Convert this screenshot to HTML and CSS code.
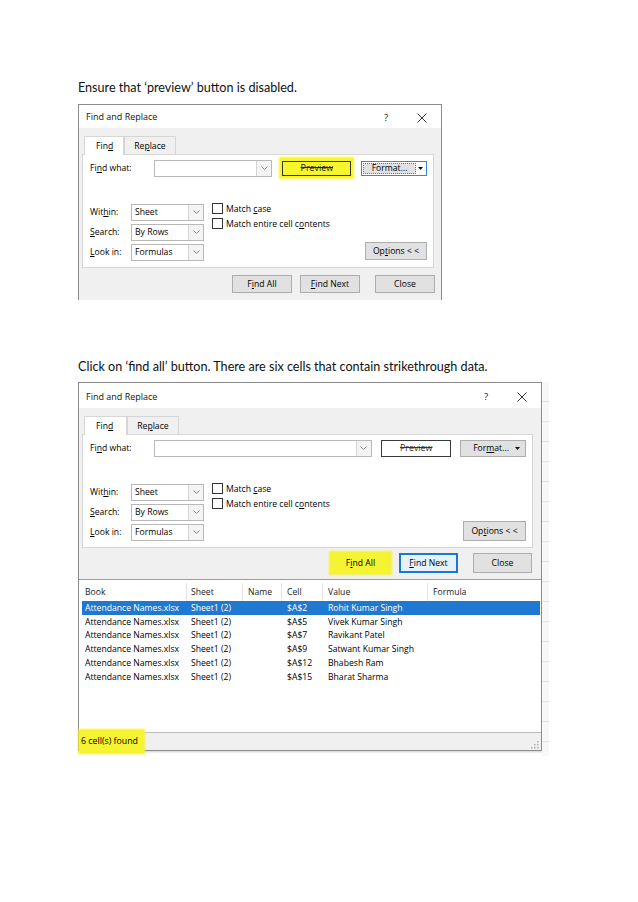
FILE: index.html
```html
<!DOCTYPE html>
<html lang="en">
<head>
<meta charset="utf-8">
<title>Find and Replace</title>
<link rel="stylesheet" href="styles.css">
</head>
<body>
<main class="page">
  <p class="caption">Ensure that ‘preview’ button is disabled.</p>

  <section class="dialog dlg1">
    <div class="titlebar">
      <span class="title">Find and Replace</span>
      <span class="help">?</span>
      <span class="close"><svg width="10" height="10" viewBox="0 0 10 10"><path d="M0.5 0.5L9.5 9.5M9.5 0.5L0.5 9.5" stroke="#333" stroke-width="1" fill="none"/></svg></span>
    </div>
    <div class="body">
      <div class="tabs">
        <span class="tab active"><span>Fin<u>d</u></span></span>
        <span class="tab"><span>Re<u>p</u>lace</span></span>
      </div>
      <div class="panel">
        <div class="find-row">
          <span class="lbl-find">Fi<u>n</u>d what:</span>
          <span class="combo combo-find"><span class="val"></span><span class="arrow"><svg width="7" height="4" viewBox="0 0 7 4"><path d="M0.5 0.5L3.5 3.5L6.5 0.5" stroke="#8a8a8a" fill="none"/></svg></span></span>
          <span class="hl-preview"><button class="btn preview"><span>Preview</span></button></span>
          <span class="format-focus">
            <span class="fmt-main"><span>Format...</span></span>
            <span class="fmt-split"><svg width="5" height="3" viewBox="0 0 5 3"><path d="M0 0H5L2.5 3Z" fill="#111"/></svg></span>
          </span>
        </div>
        <div class="opts">
          <div class="scope">
            <div class="srow"><span class="lbl">Wit<u>h</u>in:</span><span class="combo combo-sm"><span class="val">Sheet</span><span class="arrow"><svg width="7" height="4" viewBox="0 0 7 4"><path d="M0.5 0.5L3.5 3.5L6.5 0.5" stroke="#8a8a8a" fill="none"/></svg></span></span></div>
            <div class="srow"><span class="lbl"><u>S</u>earch:</span><span class="combo combo-sm"><span class="val">By Rows</span><span class="arrow"><svg width="7" height="4" viewBox="0 0 7 4"><path d="M0.5 0.5L3.5 3.5L6.5 0.5" stroke="#8a8a8a" fill="none"/></svg></span></span></div>
            <div class="srow"><span class="lbl"><u>L</u>ook in:</span><span class="combo combo-sm"><span class="val">Formulas</span><span class="arrow"><svg width="7" height="4" viewBox="0 0 7 4"><path d="M0.5 0.5L3.5 3.5L6.5 0.5" stroke="#8a8a8a" fill="none"/></svg></span></span></div>
          </div>
          <div class="checks">
            <div class="chk"><span class="box"></span><span>Match <u>c</u>ase</span></div>
            <div class="chk"><span class="box"></span><span>Match entire cell c<u>o</u>ntents</span></div>
          </div>
          <button class="btn options"><span>Op<u>t</u>ions &lt; &lt;</span></button>
        </div>
      </div>
      <div class="actions">
        <button class="btn act"><span>F<u>i</u>nd All</span></button>
        <button class="btn act"><span><u>F</u>ind Next</span></button>
        <button class="btn act act-close"><span>Close</span></button>
      </div>
    </div>
  </section>

  <p class="caption cap2">Click on ‘find all’ button. There are six cells that contain strikethrough data.</p>

  <div class="shot2">
    <section class="dialog dlg2">
      <div class="titlebar">
        <span class="title">Find and Replace</span>
        <span class="help">?</span>
        <span class="close"><svg width="10" height="10" viewBox="0 0 10 10"><path d="M0.5 0.5L9.5 9.5M9.5 0.5L0.5 9.5" stroke="#333" stroke-width="1" fill="none"/></svg></span>
      </div>
      <div class="body">
        <div class="tabs">
          <span class="tab active"><span>Fin<u>d</u></span></span>
          <span class="tab"><span>Re<u>p</u>lace</span></span>
        </div>
        <div class="panel">
          <div class="find-row">
            <span class="lbl-find">Fi<u>n</u>d what:</span>
            <span class="combo combo-find"><span class="val"></span><span class="arrow"><svg width="7" height="4" viewBox="0 0 7 4"><path d="M0.5 0.5L3.5 3.5L6.5 0.5" stroke="#8a8a8a" fill="none"/></svg></span></span>
            <button class="btn preview"><span>Preview</span></button>
            <button class="btn format"><span>For<u>m</u>at...</span><svg class="caret" width="5" height="3" viewBox="0 0 5 3"><path d="M0 0H5L2.5 3Z" fill="#111"/></svg></button>
          </div>
          <div class="opts">
            <div class="scope">
              <div class="srow"><span class="lbl">Wit<u>h</u>in:</span><span class="combo combo-sm"><span class="val">Sheet</span><span class="arrow"><svg width="7" height="4" viewBox="0 0 7 4"><path d="M0.5 0.5L3.5 3.5L6.5 0.5" stroke="#8a8a8a" fill="none"/></svg></span></span></div>
              <div class="srow"><span class="lbl"><u>S</u>earch:</span><span class="combo combo-sm"><span class="val">By Rows</span><span class="arrow"><svg width="7" height="4" viewBox="0 0 7 4"><path d="M0.5 0.5L3.5 3.5L6.5 0.5" stroke="#8a8a8a" fill="none"/></svg></span></span></div>
              <div class="srow"><span class="lbl"><u>L</u>ook in:</span><span class="combo combo-sm"><span class="val">Formulas</span><span class="arrow"><svg width="7" height="4" viewBox="0 0 7 4"><path d="M0.5 0.5L3.5 3.5L6.5 0.5" stroke="#8a8a8a" fill="none"/></svg></span></span></div>
            </div>
            <div class="checks">
              <div class="chk"><span class="box"></span><span>Match <u>c</u>ase</span></div>
              <div class="chk"><span class="box"></span><span>Match entire cell c<u>o</u>ntents</span></div>
            </div>
            <button class="btn options"><span>Op<u>t</u>ions &lt; &lt;</span></button>
          </div>
        </div>
        <div class="actions">
          <button class="btn act findall"><span>F<u>i</u>nd All</span></button>
          <button class="btn act findnext"><span><u>F</u>ind Next</span></button>
          <button class="btn act act-close"><span>Close</span></button>
        </div>
      </div>
      <div class="results">
        <div class="rhead">
          <span>Book</span><span>Sheet</span><span>Name</span><span>Cell</span><span>Value</span><span>Formula</span>
        </div>
        <div class="rrow selected"><span>Attendance Names.xlsx</span><span>Sheet1 (2)</span><span></span><span>$A$2</span><span>Rohit Kumar Singh</span><span></span></div>
        <div class="rrow"><span>Attendance Names.xlsx</span><span>Sheet1 (2)</span><span></span><span>$A$5</span><span>Vivek Kumar Singh</span><span></span></div>
        <div class="rrow"><span>Attendance Names.xlsx</span><span>Sheet1 (2)</span><span></span><span>$A$7</span><span>Ravikant Patel</span><span></span></div>
        <div class="rrow"><span>Attendance Names.xlsx</span><span>Sheet1 (2)</span><span></span><span>$A$9</span><span>Satwant Kumar Singh</span><span></span></div>
        <div class="rrow"><span>Attendance Names.xlsx</span><span>Sheet1 (2)</span><span></span><span>$A$12</span><span>Bhabesh Ram</span><span></span></div>
        <div class="rrow"><span>Attendance Names.xlsx</span><span>Sheet1 (2)</span><span></span><span>$A$15</span><span>Bharat Sharma</span><span></span></div>
      </div>
      <div class="status">
        <span class="hl-status">6 cell(s) found</span>
        <svg class="grip" width="8" height="8" viewBox="0 0 8 8"><g fill="#b0b0b0"><rect x="6" y="0" width="1.5" height="1.5"/><rect x="3" y="3" width="1.5" height="1.5"/><rect x="6" y="3" width="1.5" height="1.5"/><rect x="0" y="6" width="1.5" height="1.5"/><rect x="3" y="6" width="1.5" height="1.5"/><rect x="6" y="6" width="1.5" height="1.5"/></g></svg>
      </div>
    </section>
    <div class="sheet-strip"></div>
  </div>
</main>
</body>
</html>
```

FILE: styles.css
```css
* { box-sizing: border-box; }

body {
  margin: 0;
  background: #fff;
  color: #000;
  font-family: "Open Sans", "Noto Sans", sans-serif;
}

.page {
  padding: 80px 0 120px 78px;
}

.caption {
  margin: 0;
  font-family: Lato, "Liberation Sans", sans-serif;
  font-size: 12.6px;
  line-height: 16px;
  color: #111;
}

.cap2 { margin-top: 59px; }

/* ---------- dialog shell ---------- */
.dialog {
  background: #f0f0f0;
  border: 1px solid #8c8c8c;
  font-size: 8.65px;
  line-height: 1.2;
  display: flex;
  flex-direction: column;
}

.dialog > * { flex-shrink: 0; }

.dlg1 {
  width: 364px;
  height: 196px;
  margin-top: 8px;
  border-bottom: none;
}

.shot2 {
  display: flex;
  margin-top: 7px;
}

.dlg2 {
  width: 464px;
  height: 369px;
  box-shadow: 1px 1px 2px rgba(0, 0, 0, 0.2);
}

.sheet-strip {
  width: 7px;
  height: 374px;
  background:
    repeating-linear-gradient(to bottom, transparent 0 19px, #e2e2e2 19px 20px),
    #f8f8f8;
}

.titlebar {
  height: 23px;
  background: #fff;
  display: flex;
  align-items: center;
  padding: 2px 0 0 7px;
  font-size: 9px;
  color: #111;
}

.dlg2 .titlebar { height: 25px; padding-top: 3px; }

.title { flex: 1; }

.help {
  width: 34px;
  text-align: center;
  font-size: 9.5px;
}

.close {
  width: 38px;
  display: flex;
  justify-content: center;
  align-items: center;
}

.body {
  padding: 0 7px 0 3px;
}

.dlg2 .body { padding-right: 8px; }

/* ---------- tabs ---------- */
.tabs {
  display: flex;
  align-items: flex-end;
  height: 26px;
  padding-left: 2px;
}

.tab {
  height: 18px;
  padding: 1px 9px 0;
  display: flex;
  align-items: center;
  border: 1px solid #d6d6d6;
  border-bottom: none;
  background: #f0f0f0;
}

.tab.active {
  background: #fff;
  height: 19px;
  margin-bottom: -1px;
  padding: 1px 10px 0 11px;
}

.dlg2 .tab.active { padding-right: 13px; }

/* ---------- panel ---------- */
.panel {
  background: #fff;
  border: 1px solid #d6d6d6;
  height: 114px;
  padding: 4px 6px 0 7px;
}

.find-row {
  display: flex;
  align-items: center;
  height: 18px;
}

.lbl-find { width: 64px; padding-top: 1px; }

.combo {
  display: flex;
  height: 17px;
  border: 1px solid #b8b8b8;
  background: #fff;
}

.combo .val {
  flex: 1;
  display: flex;
  align-items: center;
  padding: 1px 0 0 3px;
}

.combo .arrow {
  width: 15px;
  border-left: 1px solid #d4d4d4;
  background: #f4f4f4;
  display: flex;
  align-items: center;
  justify-content: center;
}

.combo-find { width: 119px; }
.dlg2 .combo-find { width: 220px; }
.combo-sm { width: 73px; }

.btn {
  font: inherit;
  color: #000;
  background: #e1e1e1;
  border: 1px solid #adadad;
  padding: 1px 0 0;
  margin: 0;
  display: flex;
  align-items: center;
  justify-content: center;
}

.preview {
  width: 71px;
  height: 17px;
  margin-left: 9px;
  background: #fff;
  border: 1px solid #3a3a3a;
  color: #333;
  text-decoration: line-through;
  font-size: 8.9px;
}

.hl-preview {
  margin-left: 8px;
  width: 73px;
  height: 20px;
  display: flex;
  align-items: center;
  justify-content: center;
  background: #f7f52e;
  box-shadow: 0 0 2px 1px #f7f52e;
}

.hl-preview .preview {
  margin: 0;
  width: 69px;
  height: 15px;
  background: #f7f52e;
  border-color: #333;
  color: #222;
}

.format-focus {
  margin-left: 8px;
  width: 66px;
  height: 15px;
  display: flex;
  border: 1px solid #3d86c6;
  background: #fff;
  padding: 1px;
}

.fmt-main {
  flex: 1;
  background: #e1e1e1;
  display: flex;
  align-items: center;
  justify-content: center;
  border: 1px dotted #777;
  padding-top: 1px;
}

.fmt-split {
  width: 9px;
  display: flex;
  align-items: center;
  justify-content: center;
}

.format {
  width: 66px;
  height: 17px;
  margin-left: 9px;
  justify-content: flex-end;
  padding-right: 5px;
  gap: 6px;
}

/* ---------- options area ---------- */
.opts {
  display: flex;
  margin-top: 26px;
  height: 58px;
}

.scope {
  display: flex;
  flex-direction: column;
  gap: 2px;
}

.srow {
  display: flex;
  align-items: center;
  height: 18px;
}

.srow .lbl { width: 41px; padding-top: 1px; }

.checks {
  margin-left: 8px;
  margin-top: -2px;
}

.chk {
  display: flex;
  align-items: center;
  height: 15px;
}

.chk > span:last-child { padding-top: 1px; }

.box {
  width: 11px;
  height: 11px;
  border: 1px solid #333;
  background: #fff;
  margin-right: 3px;
}

.options {
  margin-left: auto;
  align-self: flex-end;
  width: 62px;
  height: 18px;
  margin-bottom: 1px;
}

.dlg2 .options {
  width: 63px;
  height: 20px;
  margin-bottom: 0;
}

/* ---------- action buttons ---------- */
.actions {
  display: flex;
  justify-content: flex-end;
  height: 32px;
  padding: 7px 0 0;
  margin-right: -1px;
  gap: 8px;
}

.act {
  width: 60px;
  height: 18px;
}

.act-close { margin-left: 7px; }

.dlg2 .actions {
  height: 31px;
  padding-top: 5px;
  margin-right: 1px;
  gap: 9px;
}

.dlg2 .act {
  width: 59px;
  height: 20px;
}

.dlg2 .act-close { margin-left: 6px; }

.findall {
  background: #f5f332;
  border-color: #f5f332;
  box-shadow: 0 0 2px 2px #f5f332;
}

.findnext {
  background: #e5f1fb;
  border: 2px solid #1b78cf;
}

/* ---------- results ---------- */
.results {
  height: 154px;
  background: #fff;
  border-top: 1px solid #9c9c9c;
  border-bottom: 1px solid #bdbdbd;
  padding-top: 3px;
}

.rhead,
.rrow {
  display: grid;
  grid-template-columns: 105px 56px 39px 41px 105px 1fr;
  align-items: center;
}

.rhead {
  height: 18px;
  margin-left: 3px;
  color: #222;
}

.rhead span {
  height: 100%;
  display: flex;
  align-items: center;
  padding-left: 5px;
  border-right: 1px solid #e3e3e3;
}

.rhead span:first-child { padding-left: 3px; }
.rhead span:nth-child(2) { padding-left: 4px; }
.rhead span:last-child { border-right: none; }

.rrow {
  height: 13.8px;
  margin: 0 1px 0 3px;
}

.rrow span { padding-left: 5px; white-space: nowrap; }
.rrow span:first-child { padding-left: 3px; }
.rrow span:nth-child(2) { padding-left: 4px; }

.rrow.selected {
  background: #1f78d1;
  color: #fff;
}

/* ---------- status bar ---------- */
.status {
  height: 17px;
  display: flex;
  align-items: center;
  justify-content: space-between;
  padding-right: 2px;
}

.hl-status {
  background: #f5f332;
  padding: 6px 6px 6px 2px;
  margin: -6px 0;
  box-shadow: 0 0 2px 1px #f5f332;
  font-size: 8.8px;
}

.grip { align-self: flex-end; margin-bottom: 1px; }
```
